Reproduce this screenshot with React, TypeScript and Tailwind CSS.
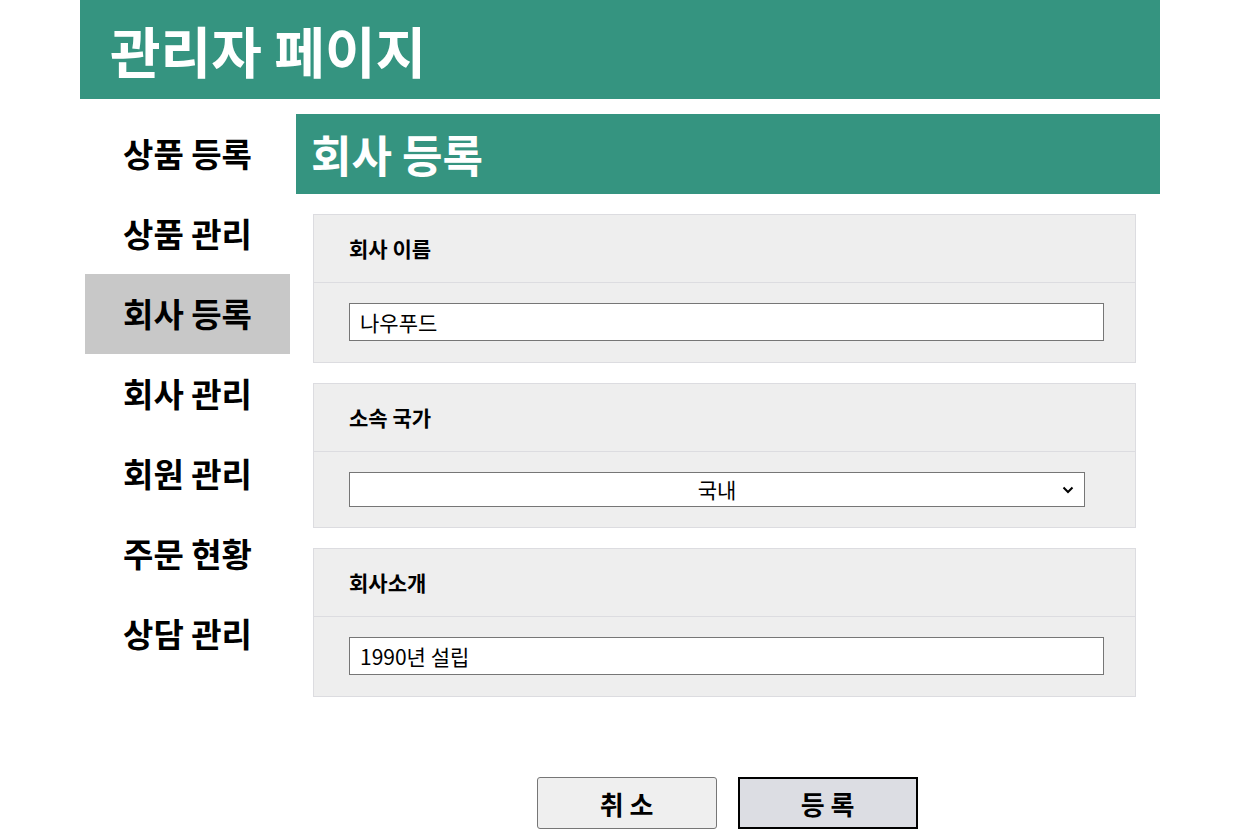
import React from "react";

const font = { fontFamily: '"Noto Sans CJK KR", "Noto Sans", sans-serif' };

function Section({ label, children, py }: { label: string; children: React.ReactNode; py: string }) {
  return (
    <div className="border border-[#dcdce0] bg-[#eeeeee]">
      <div className="h-[68px] flex items-center pl-[35px] border-b border-[#dcdce0] text-[21px] font-bold text-black">
        {label}
      </div>
      <div className={`pl-[35px] pr-[31px] ${py}`}>{children}</div>
    </div>
  );
}

export default function App() {
  const menu = ["상품 등록", "상품 관리", "회사 등록", "회사 관리", "회원 관리", "주문 현황", "상담 관리"];
  return (
    <div className="min-h-[837px] bg-white" style={font}>
      <div className="ml-[80px] w-[1080px]">
        <header className="h-[99px] bg-[#359480] flex items-center pl-[30px]">
          <h1 className="text-[55px] font-bold text-white leading-none">관리자 페이지</h1>
        </header>
        <div className="flex mt-[15px]">
          <nav className="ml-[5px] w-[205px] flex flex-col">
            {menu.map((m) => (
              <div
                key={m}
                className={`h-[80px] flex items-center justify-center text-[33px] font-bold text-black ${m === "회사 등록" ? "bg-[#c8c8c8]" : ""}`}
              >
                {m}
              </div>
            ))}
          </nav>
          <main className="ml-[6px] w-[864px]">
            <div className="h-[80px] bg-[#359480] flex items-center pl-[15px]">
              <h2 className="text-[44px] font-bold text-white leading-none">회사 등록</h2>
            </div>
            <div className="ml-[17px] mr-[24px] mt-[20px] flex flex-col gap-[20px]">
              <Section label="회사 이름" py="pt-[20px] pb-[21px]">
                <input
                  defaultValue="나우푸드"
                  className="block w-full h-[38px] bg-white border border-[#767676] pl-[10px] text-[21px] text-black outline-none"
                  style={font}
                />
              </Section>
              <Section label="소속 국가" py="pt-[20px] pb-[20px]">
                <div className="relative w-[736px] h-[35px] bg-white border border-[#767676] flex items-center justify-center text-[21px] text-black">
                  국내
                  <svg className="absolute right-[10px] top-1/2 -translate-y-1/2" width="12" height="8" viewBox="0 0 12 8">
                    <path d="M1.5 1.5 L6 6 L10.5 1.5" fill="none" stroke="black" strokeWidth="2" />
                  </svg>
                </div>
              </Section>
              <Section label="회사소개" py="pt-[20px] pb-[21px]">
                <input
                  defaultValue="1990년 설립"
                  className="block w-full h-[38px] bg-white border border-[#767676] pl-[10px] text-[21px] text-black outline-none"
                  style={font}
                />
              </Section>
            </div>
            <div className="mt-[80px] pr-[2px] flex justify-center gap-[21px]">
              <button className="w-[180px] h-[52px] bg-[#efefef] border border-[#767676] rounded-[3px] text-[26px] font-bold text-black" style={font}>
                취 소
              </button>
              <button className="w-[180px] h-[52px] bg-[#dcdde3] border-2 border-black text-[26px] font-bold text-black" style={font}>
                등 록
              </button>
            </div>
          </main>
        </div>
      </div>
    </div>
  );
}
